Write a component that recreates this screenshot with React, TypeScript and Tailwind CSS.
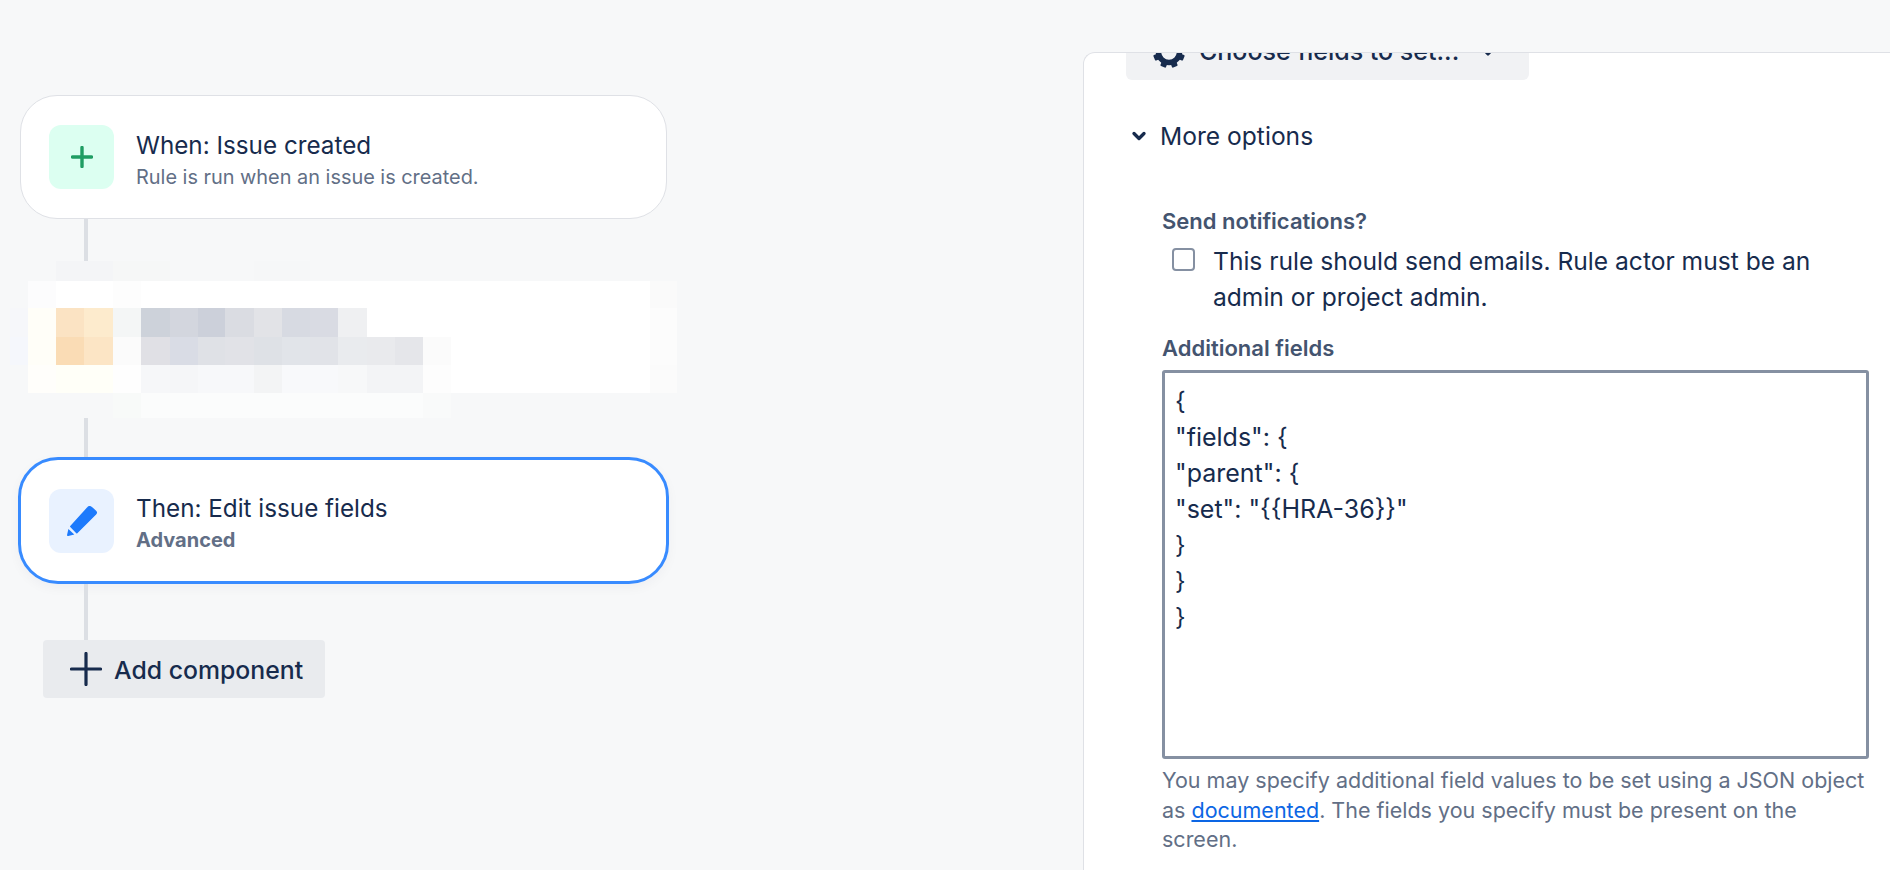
import { ChevronDown } from 'lucide-react';

// pixelated (redacted) card: one row per band, cells are [x, width, colour]
const mosaic: { y: number; h: number; cells: [number, number, string][] }[] = [
  { y: 0, h: 20, cells: [[56, 57, '#f4f5f7'], [113, 57, '#f6f7f7'], [254, 56, '#f6f7f8']] },
  {
    y: 20,
    h: 27,
    cells: [[28, 28, '#fcfcfd'], [56, 57, '#ffffff'], [113, 28, '#fdfdfd'], [141, 509, '#ffffff'], [650, 27, '#fafafa']],
  },
  {
    y: 47,
    h: 29,
    cells: [
      [10, 18, '#f6f7fa'], [28, 28, '#fffef8'], [56, 28, '#fbe3c3'], [84, 29, '#fdebcd'], [113, 28, '#f4f6f6'],
      [141, 29, '#cdd2da'], [170, 28, '#d3d6de'], [198, 27, '#ccd0da'], [225, 29, '#dadce2'], [254, 28, '#e2e3e7'],
      [282, 28, '#d7dae2'], [310, 28, '#d9dbe3'], [338, 29, '#eff0f2'], [367, 283, '#ffffff'], [650, 27, '#fcfcfc'],
    ],
  },
  {
    y: 76,
    h: 28,
    cells: [
      [10, 18, '#f5f7fc'], [28, 28, '#fffef8'], [56, 28, '#fadcb5'], [84, 29, '#fce5c5'], [113, 28, '#fbfbfb'],
      [141, 29, '#e0e0e5'], [170, 28, '#d9dce5'], [198, 27, '#dfe1e6'], [225, 29, '#e1e2e7'], [254, 28, '#dee1e6'],
      [282, 28, '#e1e4e9'], [310, 28, '#e1e3e8'], [338, 29, '#e9ebee'], [367, 28, '#e9eaed'], [395, 28, '#e5e6ea'],
      [423, 28, '#fbfbfb'], [451, 199, '#ffffff'], [650, 27, '#fcfcfc'],
    ],
  },
  {
    y: 104,
    h: 28,
    cells: [
      [28, 28, '#fffefb'], [56, 57, '#fffff8'], [113, 28, '#fefefe'], [141, 29, '#f6f7f9'], [170, 28, '#f5f6f8'],
      [198, 56, '#f7f8fa'], [254, 28, '#f3f4f5'], [282, 56, '#f8f9fb'], [338, 29, '#f7f8f9'], [367, 56, '#f3f4f6'],
      [423, 28, '#fdfdfd'], [451, 199, '#ffffff'], [650, 27, '#fbfbfb'],
    ],
  },
  { y: 132, h: 25, cells: [[113, 28, '#f8faf9'], [141, 282, '#fbfcfc'], [423, 28, '#f9fafa']] },
];

function Connector({ h }: { h: string }) {
  return <div className={`ml-[64px] w-1 bg-[#dcdfe4] ${h}`} />;
}

function Gear() {
  return (
    <svg width="32" height="32" viewBox="0 0 32 32" className="shrink-0 text-[#172b4d]">
      <circle cx="16" cy="16" r="10.5" fill="none" stroke="currentColor" strokeWidth="5.5" />
      {[22.5, 67.5, 112.5, 157.5, 202.5, 247.5, 292.5, 337.5].map((a) => (
        <rect key={a} x="13" y="0" width="6" height="6" rx="1" fill="currentColor" transform={`rotate(${a} 16 16)`} />
      ))}
    </svg>
  );
}

export default function App() {
  return (
    <div className="flex h-[870px] w-[1890px] overflow-hidden bg-[#f7f8f9] [font-family:Inter,sans-serif] text-[#172b4d]">
      <div className="w-[1083px] shrink-0 pt-[95px] pl-5">
        <div className="flex h-[124px] w-[647px] items-center gap-[22px] rounded-[37px] border border-[#dfe1e6] bg-white pl-7">
          <div className="flex h-16 w-[65px] items-center justify-center rounded-xl bg-[#dcfff1]">
            <svg width="22" height="22" viewBox="0 0 22 22" className="text-[#1f9d63]">
              <path d="M11 1.5v19M1.5 11h19" stroke="currentColor" strokeWidth="3.4" strokeLinecap="round" />
            </svg>
          </div>
          <div className="pt-[3px]">
            <div className="text-[24.25px] leading-9">When: Issue created</div>
            <div className="text-[19.9px] leading-[26px] text-[#626f86]">Rule is run when an issue is created.</div>
          </div>
        </div>
        <Connector h="h-[42px]" />
        <svg width="680" height="157" viewBox="0 0 680 157" shapeRendering="crispEdges" className="-ml-5 block">
          {mosaic.map((row) =>
            row.cells.map(([x, w, c]) => <rect key={`${row.y}-${x}`} x={x} y={row.y} width={w} height={row.h} fill={c} />),
          )}
        </svg>
        <Connector h="h-[39px]" />
        <div className="-ml-0.5 flex h-[127px] w-[651px] items-center gap-[22px] rounded-[40px] border-[3px] border-[#388bff] bg-white pl-7 shadow-[0_4px_12px_rgba(9,30,66,0.04)]">
          <div className="flex h-16 w-[65px] items-center justify-center rounded-xl bg-[#e9f2ff]">
            <svg width="64" height="64" viewBox="0 0 64 64" className="text-[#1d7afc]">
              <path
                d="M38 18.5 20.8 37.5l6 6.3L45.6 25a2 2 0 0 0 0-2.8l-4.4-3.9a2.2 2.2 0 0 0-3.2.2Z"
                fill="currentColor"
                stroke="currentColor"
                strokeWidth="1.5"
                strokeLinejoin="round"
              />
              <path d="m18.4 40 5.9 5.5-6 1.4a1 1 0 0 1-1.2-1.2Z" fill="currentColor" />
            </svg>
          </div>
          <div className="pt-[3px]">
            <div className="text-[24.25px] leading-9">Then: Edit issue fields</div>
            <div className="text-[20px] leading-[27px] font-bold text-[#626f86]">Advanced</div>
          </div>
        </div>
        <Connector h="h-14" />
        <div className="ml-[23px] flex h-[58px] w-[282px] items-center gap-3 rounded bg-[#e9ebee] pl-[27px]">
          <svg width="32" height="34" viewBox="0 0 32 34" className="shrink-0">
            <path d="M16 1.5v31M1.5 17h29" stroke="currentColor" strokeWidth="3.2" strokeLinecap="round" />
          </svg>
          <span className="pt-[3px] text-[24.8px] font-medium">Add component</span>
        </div>
      </div>

      <div className="mt-[52px] flex-1 overflow-hidden rounded-tl-xl border-t border-l border-[#dfe1e6] bg-white pl-[42px]">
        <div className="-mt-[30px] flex h-[57px] w-[403px] items-center rounded-md bg-[#f1f2f4] pl-[27px]">
          <Gear />
          <span className="ml-3.5 text-[25px] font-medium">Choose fields to set...</span>
          <ChevronDown size={18} strokeWidth={3.5} className="ml-5" />
        </div>

        <div className="mt-[38px] flex h-9 items-center gap-[11px] pl-[3px]">
          <ChevronDown size={20} strokeWidth={4} className="shrink-0" />
          <span className="text-[24.6px]">More options</span>
        </div>

        <div className="mt-[53px] ml-9 w-[707px]">
          <div className="text-[22px] leading-7 font-semibold text-[#44546f]">Send notifications?</div>
          <div className="mt-2 flex gap-[18px] pl-[10px]">
            <div className="mt-[5px] h-[23px] w-[23px] shrink-0 rounded border-2 border-[#8590a2]" />
            <div className="text-[24.6px] leading-9">This rule should send emails. Rule actor must be an admin or project admin.</div>
          </div>
          <div className="mt-[19px] text-[22px] leading-7 font-semibold text-[#44546f]">Additional fields</div>
          <textarea
            readOnly
            className="mt-2 block h-[389px] w-[707px] resize-none rounded-[3px] border-[3px] border-[#8590a2] bg-white px-[10px] py-[10px] text-[25px] leading-9 text-[#172b4d] outline-none"
            defaultValue={'{\n"fields": {\n"parent": {\n"set": "{{HRA-36}}"\n}\n}\n}'}
          />
          <p className="mt-[7px] text-[21.5px] leading-[29.5px] text-[#626f86]">
            You may specify additional field values to be set using a JSON object as{' '}
            <a href="#documented" className="text-[#0c66e4] underline">
              documented
            </a>
            . The fields you specify must be present on the screen.
          </p>
        </div>
      </div>
    </div>
  );
}
